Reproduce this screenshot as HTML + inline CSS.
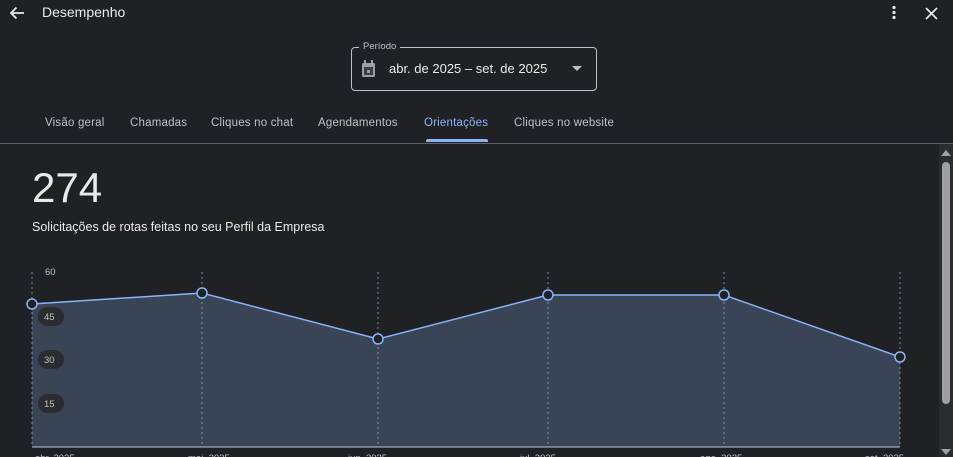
<!DOCTYPE html>
<html><head><meta charset="utf-8"><style>
body{margin:0;width:953px;height:457px;background:#202124;overflow:hidden;font-family:"Liberation Sans",sans-serif;color:#e8eaed;position:relative}
.a{position:absolute}
.tab{position:absolute;top:117px;font-size:11.5px;color:#bdc1c6;letter-spacing:.2px}
</style></head><body>
<svg class="a" style="left:8px;top:5px" width="18" height="16" viewBox="0 0 18 16"><path d="M16 8H3M8.5 2.5L3 8l5.5 5.5" stroke="#e8eaed" stroke-width="1.8" fill="none"/></svg>
<div class="a" style="left:42px;top:4px;font-size:14px">Desempenho</div>
<svg class="a" style="left:890px;top:5px" width="8" height="16"><circle cx="4" cy="2.5" r="1.6" fill="#e8eaed"/><circle cx="4" cy="7.5" r="1.6" fill="#e8eaed"/><circle cx="4" cy="12.5" r="1.6" fill="#e8eaed"/></svg>
<svg class="a" style="left:925px;top:7px" width="13" height="13"><path d="M1 1L12 12M12 1L1 12" stroke="#e8eaed" stroke-width="1.7"/></svg>
<div class="a" style="left:351px;top:47px;width:244px;height:42px;border:1px solid #bdc1c6;border-radius:4px"></div>
<div class="a" style="left:359px;top:41px;background:#202124;padding:0 4px;font-size:9.5px;color:#bdc1c6">Período</div>
<svg class="a" style="left:361px;top:60px" width="16" height="18"><rect x="1" y="3" width="13" height="14" rx="1.5" fill="#9aa0a6"/><rect x="3" y="7" width="9" height="8" fill="#3c4043"/><rect x="3" y="0" width="2" height="4" fill="#9aa0a6"/><rect x="10" y="0" width="2" height="4" fill="#9aa0a6"/><rect x="6" y="10" width="3" height="3" fill="#9aa0a6"/></svg>
<div class="a" style="left:389px;top:61px;font-size:13px">abr. de 2025 – set. de 2025</div>
<svg class="a" style="left:572px;top:66px" width="10" height="5"><path d="M0 0h10L5 5z" fill="#bdc1c6"/></svg>
<div class="tab" style="left:45px">Visão geral</div>
<div class="tab" style="left:130px">Chamadas</div>
<div class="tab" style="left:211px">Cliques no chat</div>
<div class="tab" style="left:318px">Agendamentos</div>
<div class="tab" style="left:424px;color:#8ab4f8">Orientações</div>
<div class="tab" style="left:514px">Cliques no website</div>
<div class="a" style="left:426px;top:139px;width:62px;height:3px;background:#8ab4f8;border-radius:2px 2px 0 0"></div>
<div class="a" style="left:0;top:143px;width:953px;height:1px;background:#5f6368"></div>
<div class="a" style="left:32px;top:164px;font-size:42px">274</div>
<div class="a" style="left:32px;top:220px;font-size:12.5px">Solicitações de rotas feitas no seu Perfil da Empresa</div>
<svg class="a" style="left:0;top:0" width="940" height="457">
<polygon points="32,304 202,293 378,339 548,295 724,295 900,357 900,447 32,447" fill="#394457"/>
<g stroke="#9aa3b3" stroke-dasharray="2,3" stroke-width="0.8">
<line x1="32" y1="272" x2="32" y2="447"/><line x1="202" y1="272" x2="202" y2="447"/><line x1="378" y1="272" x2="378" y2="447"/><line x1="548" y1="272" x2="548" y2="447"/><line x1="724" y1="272" x2="724" y2="447"/><line x1="900" y1="272" x2="900" y2="447"/></g>
<line x1="32" y1="447" x2="900" y2="447" stroke="#9aa7bf" stroke-width="1.2"/>
<polyline points="32,304 202,293 378,339 548,295 724,295 900,357" fill="none" stroke="#8ab4f8" stroke-width="1.5"/>
<g fill="#202124" stroke="#8ab4f8" stroke-width="1.5"><circle cx="32" cy="304" r="5"/><circle cx="202" cy="293" r="5"/><circle cx="378" cy="339" r="5"/><circle cx="548" cy="295" r="5"/><circle cx="724" cy="295" r="5"/><circle cx="900" cy="357" r="5"/></g>
<g fill="#2b2c2f"><rect x="38" y="307" width="26" height="19" rx="9.5"/><rect x="38" y="350" width="26" height="19" rx="9.5"/><rect x="38" y="394" width="26" height="19" rx="9.5"/></g>
<g font-size="9.5" fill="#bdc1c6" font-family="Liberation Sans"><text x="45" y="275">60</text><text x="44" y="320">45</text><text x="44" y="363">30</text><text x="44" y="407">15</text></g>
<g font-size="9.5" fill="#bdc1c6" font-family="Liberation Sans"><text x="35" y="461">abr. 2025</text><text x="188" y="461">mai. 2025</text><text x="348" y="461">jun. 2025</text><text x="520" y="461">jul. 2025</text><text x="700" y="461">ago. 2025</text><text x="865" y="461">set. 2025</text></g>
</svg>
<div class="a" style="left:939px;top:144px;width:14px;height:313px;background:#2b2c2f"></div>
<div class="a" style="left:942px;top:162px;width:8px;height:242px;background:#a0a0a0;border-radius:4px"></div>
<svg class="a" style="left:941px;top:149px" width="10" height="8"><path d="M0 7L5 1L10 7z" fill="#a0a0a0"/></svg>
<svg class="a" style="left:941px;top:448px" width="10" height="8"><path d="M0 1L5 7L10 1z" fill="#a0a0a0"/></svg>
</body></html>
